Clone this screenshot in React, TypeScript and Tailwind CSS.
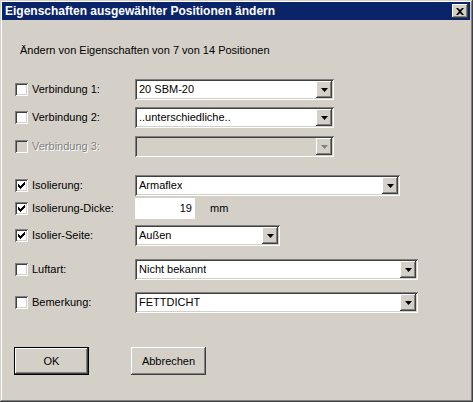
import React from 'react';

const raised =
  'shadow-[inset_-1px_-1px_#404040,inset_1px_1px_#ffffff,inset_-2px_-2px_#808080,inset_2px_2px_#d4d0c8]';
const sunken =
  'shadow-[inset_1px_1px_#808080,inset_-1px_-1px_#ffffff,inset_2px_2px_#404040,inset_-2px_-2px_#d4d0c8]';

const Check: React.FC<{ checked?: boolean; disabled?: boolean }> = ({ checked, disabled }) => (
  <div
    className={`w-[13px] h-[13px] shrink-0 flex items-center justify-center ${sunken} ${
      disabled ? 'bg-[#d4d0c8]' : 'bg-white'
    }`}
  >
    {checked && (
      <svg width="7" height="7" viewBox="0 0 7 7">
        <path d="M0 2h1v1h1v1h1V3h1V2h1V1h1V0h1v3H6v1H5v1H4v1H3v1H2V6H1V5H0z" fill="#000" />
      </svg>
    )}
  </div>
);

const DropBtn: React.FC<{ disabled?: boolean }> = ({ disabled }) => (
  <div className={`w-[16px] h-[17px] bg-[#d4d0c8] flex items-center justify-center ${raised}`}>
    <svg width="7" height="4" viewBox="0 0 7 4">
      <path d="M0 0h7L3.5 4z" fill={disabled ? '#808080' : '#000'} />
    </svg>
  </div>
);

const Combo: React.FC<{ width: string; value?: string; disabled?: boolean }> = ({ width, value, disabled }) => (
  <div
    className={`${width} h-[21px] flex items-center justify-between pl-[4px] pr-[2px] ${sunken} ${
      disabled ? 'bg-[#d4d0c8]' : 'bg-white'
    }`}
  >
    <span className="text-black truncate">{value}</span>
    <DropBtn disabled={disabled} />
  </div>
);

const Row: React.FC<{
  label: string;
  checked?: boolean;
  disabled?: boolean;
  mt: string;
  children: React.ReactNode;
}> = ({ label, checked, disabled, mt, children }) => (
  <div className={`${mt} h-[21px] flex items-center`}>
    <div className="w-[13px]" />
    <Check checked={checked} disabled={disabled} />
    <span
      className={`ml-[4px] w-[103px] ${
        disabled ? 'text-[#808080] [text-shadow:1px_1px_#ffffff]' : 'text-black'
      }`}
    >
      {label}
    </span>
    {children}
  </div>
);

export default function App() {
  return (
    <div
      className="w-[473px] h-[402px] bg-[#d4d0c8] pt-[2px] pl-[2px] pr-[3px] text-[11px] leading-[13px] shadow-[inset_-1px_-1px_#404040,inset_1px_1px_#d4d0c8,inset_-2px_-2px_#808080,inset_2px_2px_#ffffff] flex flex-col"
      style={{ fontFamily: '"Liberation Sans", Arial, sans-serif' }}
    >
      {/* Title bar */}
      <div className="h-[18px] bg-[#0a246a] flex items-center justify-between pl-[3px] pr-[2px]">
        <span className="text-white font-bold text-[12px]">Eigenschaften ausgewählter Positionen ändern</span>
        <div className={`w-[16px] h-[14px] bg-[#d4d0c8] flex items-center justify-center ${raised}`}>
          <svg width="8" height="7" viewBox="0 0 8 7">
            <path d="M0 0h2l2 2 2-2h2L5 3.5 8 7H6L4 5 2 7H0l3-3.5z" fill="#000" />
          </svg>
        </div>
      </div>

      <div className="flex flex-col">
        <div className="mt-[24px] ml-[18px] text-black">Ändern von Eigenschaften von 7 von 14 Positionen</div>

        <Row label="Verbindung 1:" mt="mt-[22px]">
          <Combo width="w-[199px]" value="20 SBM-20" />
        </Row>
        <Row label="Verbindung 2:" mt="mt-[7px]">
          <Combo width="w-[199px]" value="..unterschiedliche.." />
        </Row>
        <Row label="Verbindung 3:" mt="mt-[8px]" disabled>
          <Combo width="w-[199px]" disabled />
        </Row>

        <Row label="Isolierung:" mt="mt-[18px]" checked>
          <Combo width="w-[265px]" value="Armaflex" />
        </Row>
        <Row label="Isolierung-Dicke:" mt="mt-[2px]" checked>
          <div className="w-[60px] h-[21px] bg-white flex items-center justify-end pr-[3px] text-black">19</div>
          <span className="ml-[15px] text-black">mm</span>
        </Row>
        <Row label="Isolier-Seite:" mt="mt-[6px]" checked>
          <Combo width="w-[145px]" value="Außen" />
        </Row>

        <Row label="Luftart:" mt="mt-[13px]">
          <Combo width="w-[283px]" value="Nicht bekannt" />
        </Row>
        <Row label="Bemerkung:" mt="mt-[12px]">
          <Combo width="w-[283px]" value="FETTDICHT" />
        </Row>

        <div className="mt-[34px] flex items-center pl-[12px]">
          <div className="w-[75px] h-[28px] border border-black">
            <div className={`w-full h-full bg-[#d4d0c8] flex items-center justify-center text-black ${raised}`}>OK</div>
          </div>
          <div
            className={`ml-[42px] w-[75px] h-[28px] bg-[#d4d0c8] flex items-center justify-center text-black ${raised}`}
          >
            Abbrechen
          </div>
        </div>
      </div>
    </div>
  );
}
